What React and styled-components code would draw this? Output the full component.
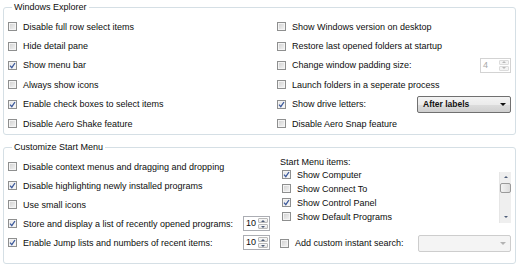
import React from "react";
import styled, { createGlobalStyle } from "styled-components";

const GlobalStyle = createGlobalStyle`
  html, body {
    margin: 0;
    padding: 0;
    background: #fff;
  }
  body {
    font-family: "Liberation Sans", Arial, sans-serif;
    font-size: 9px;
    color: #0d0d0d;
  }
`;

const explorerLeft = [
    { label: "Disable full row select items" },
    { label: "Hide detail pane" },
    { label: "Show menu bar", checked: true },
    { label: "Always show icons" },
    { label: "Enable check boxes to select items", checked: true },
    { label: "Disable Aero Shake feature" },
];

const startItems = [
    { label: "Show Computer", checked: true },
    { label: "Show Connect To" },
    { label: "Show Control Panel", checked: true },
    { label: "Show Default Programs" },
];

function CheckBox({ checked }) {
    return (
        <Box $checked={checked}>
            {checked && (
                <svg width="7" height="7" viewBox="0 0 7 7">
                    <path
                        d="M1 3.6 L2.8 5.6 L6 1"
                        fill="none"
                        stroke="#3d5a9c"
                        strokeWidth="1.3"
                    />
                </svg>
            )}
        </Box>
    );
}

function Check({ label, checked, $h }) {
    return (
        <Row $h={$h}>
            <CheckBox checked={checked} />
            <span>{label}</span>
        </Row>
    );
}

function Spinner({ value, width, disabled }) {
    return (
        <Spin $w={width} $disabled={disabled}>
            <SpinValue $disabled={disabled}>{value}</SpinValue>
            <SpinButtons $disabled={disabled}>
                <SpinBtn $disabled={disabled}>
                    <Arrow $up $disabled={disabled} />
                </SpinBtn>
                <SpinBtn $disabled={disabled}>
                    <Arrow $disabled={disabled} />
                </SpinBtn>
            </SpinButtons>
        </Spin>
    );
}

function App() {
    return (
        <>
            <GlobalStyle />
            <Page>
                <Group $pad="4px 4px 1px 4px">
                    <Legend>Windows Explorer</Legend>
                    <Columns $cols="269px 1fr">
                        <Column>
                            {explorerLeft.map((item) => (
                                <Check key={item.label} {...item} />
                            ))}
                        </Column>
                        <Column>
                            <Check label='Show Windows version on desktop' />
                            <Check label='Restore last opened folders at startup' />
                            <Row>
                                <CheckBox />
                                <span>Change window padding size:</span>
                                <Push>
                                    <Spinner value='4' width={31} disabled />
                                </Push>
                            </Row>
                            <Check label='Launch folders in a seperate process' />
                            <Row>
                                <CheckBox checked />
                                <span>Show drive letters:</span>
                                <Push>
                                    <Select $w={94}>
                                        <span>After labels</span>
                                        <DropArrow />
                                    </Select>
                                </Push>
                            </Row>
                            <Check label='Disable Aero Snap feature' />
                        </Column>
                    </Columns>
                </Group>

                <Group $pad="4px 4px 10px 4px">
                    <Legend>Customize Start Menu</Legend>
                    <Columns $cols="262px 1fr" $gap="10px">
                        <Column>
                            <Check $h={19} label='Disable context menus and dragging and dropping' />
                            <Check $h={19} checked label='Disable highlighting newly installed programs' />
                            <Check $h={19} label='Use small icons' />
                            <Row $h={19}>
                                <CheckBox checked />
                                <span>Store and display a list of recently opened programs:</span>
                                <Push>
                                    <Spinner value='10' width={27} />
                                </Push>
                            </Row>
                            <Row $h={19}>
                                <CheckBox checked />
                                <span>Enable Jump lists and numbers of recent items:</span>
                                <Push>
                                    <Spinner value='10' width={27} />
                                </Push>
                            </Row>
                        </Column>
                        <Column>
                            <ListLabel>Start Menu items:</ListLabel>
                            <ListBox>
                                <ListItems>
                                    {startItems.map((item) => (
                                        <Check key={item.label} $h={14} {...item} />
                                    ))}
                                </ListItems>
                                <ScrollBar>
                                    <ScrollBtn>
                                        <Arrow $up />
                                    </ScrollBtn>
                                    <Thumb />
                                    <Track />
                                    <ScrollBtn>
                                        <Arrow />
                                    </ScrollBtn>
                                </ScrollBar>
                            </ListBox>
                            <Row $h={19} $top={10}>
                                <CheckBox />
                                <span>Add custom instant search:</span>
                                <Push>
                                    <Select $w={93} $disabled>
                                        <span />
                                        <DropArrow $disabled />
                                    </Select>
                                </Push>
                            </Row>
                        </Column>
                    </Columns>
                </Group>
            </Page>
        </>
    );
}

const Page = styled.div`
    width: 520px;
    height: 269px;
    box-sizing: border-box;
    padding: 2px 4px 0 3px;
    display: flex;
    flex-direction: column;
    gap: 7px;
`;

const Group = styled.fieldset`
    margin: 0;
    min-width: 0;
    padding: ${(p) => p.$pad};
    border: 1px solid #d5dfe5;
    border-radius: 3px;
`;

const Legend = styled.legend`
    margin-left: 4px;
    padding: 0 2px;
    line-height: 11px;
`;

const Columns = styled.div`
    display: grid;
    grid-template-columns: ${(p) => p.$cols};
    column-gap: ${(p) => p.$gap || "0"};
`;

const Column = styled.div`
    display: flex;
    flex-direction: column;
    min-width: 0;
`;

const Row = styled.div`
    display: flex;
    align-items: center;
    gap: 6px;
    height: ${(p) => p.$h || 19.4}px;
    margin-top: ${(p) => p.$top || 0}px;
    white-space: nowrap;
`;

const Push = styled.div`
    margin-left: auto;
    display: flex;
`;

const Box = styled.span`
    flex: none;
    width: 9px;
    height: 9px;
    box-sizing: border-box;
    display: flex;
    align-items: center;
    justify-content: center;
    border: 1px solid #8e8f8f;
    box-shadow: inset 0 0 0 1px #f4f4f4;
    background: ${(p) =>
        p.$checked
            ? "linear-gradient(135deg, #e4e4e4, #fbfbfb)"
            : "linear-gradient(135deg, #cfcfcf 0%, #e6e6e6 60%, #f6f6f6 100%)"};
`;

const Spin = styled.div`
    display: flex;
    width: ${(p) => p.$w}px;
    height: 15px;
    box-sizing: border-box;
    border: 1px solid ${(p) => (p.$disabled ? "#d3d3d3" : "#abadb3")};
    background: #fff;
`;

const SpinValue = styled.span`
    flex: 1;
    padding-left: 2px;
    line-height: 13px;
    color: ${(p) => (p.$disabled ? "#a8a8a8" : "#0d0d0d")};
`;

const SpinButtons = styled.div`
    width: 12px;
    display: flex;
    flex-direction: column;
    gap: 1px;
    padding: 1px;
    box-sizing: border-box;
`;

const SpinBtn = styled.span`
    flex: 1;
    display: flex;
    align-items: center;
    justify-content: center;
    border: 1px solid ${(p) => (p.$disabled ? "#dcdcdc" : "#b9b9b9")};
    border-radius: 1px;
    background: ${(p) =>
        p.$disabled ? "#f4f4f4" : "linear-gradient(#fafafa, #e4e4e4)"};
`;

const Arrow = styled.span`
    width: 0;
    height: 0;
    border-left: 2px solid transparent;
    border-right: 2px solid transparent;
    ${(p) => (p.$up ? "border-bottom" : "border-top")}: 2px solid
        ${(p) => (p.$disabled ? "#b9b9b9" : "#4d5c78")};
`;

const Select = styled.div`
    display: flex;
    align-items: center;
    justify-content: space-between;
    width: ${(p) => p.$w}px;
    height: 17px;
    box-sizing: border-box;
    padding: 0 4px 0 5px;
    border: 1px solid ${(p) => (p.$disabled ? "#cdcdcd" : "#707070")};
    border-radius: 2px;
    font-size: 8.5px;
    font-weight: bold;
    color: #111;
    background: ${(p) =>
        p.$disabled
            ? "#f4f4f4"
            : "linear-gradient(#f3f3f3 0%, #ebebeb 50%, #dddddd 50%, #cfcfcf 100%)"};
`;

const DropArrow = styled.span`
    width: 0;
    height: 0;
    border-left: 3px solid transparent;
    border-right: 3px solid transparent;
    border-top: 3px solid ${(p) => (p.$disabled ? "#b3b3b3" : "#111")};
`;

const ListLabel = styled.div`
    height: 10.5px;
    line-height: 10px;
`;

const ListBox = styled.div`
    display: flex;
    height: 56px;
`;

const ListItems = styled.div`
    flex: 1;
    display: flex;
    flex-direction: column;
    padding-left: 2px;
`;

const ScrollBar = styled.div`
    width: 11px;
    margin: 4px 0 1px;
    display: flex;
    flex-direction: column;
    background: #efefef;
    border-left: 1px solid #e6e6e6;
`;

const ScrollBtn = styled.span`
    height: 11px;
    display: flex;
    align-items: center;
    justify-content: center;
`;

const Thumb = styled.span`
    height: 10px;
    box-sizing: border-box;
    border: 1px solid #9a9a9a;
    border-radius: 2px;
    background: linear-gradient(90deg, #f3f3f3, #dcdcdc);
`;

const Track = styled.span`
    flex: 1;
`;

export default App;
